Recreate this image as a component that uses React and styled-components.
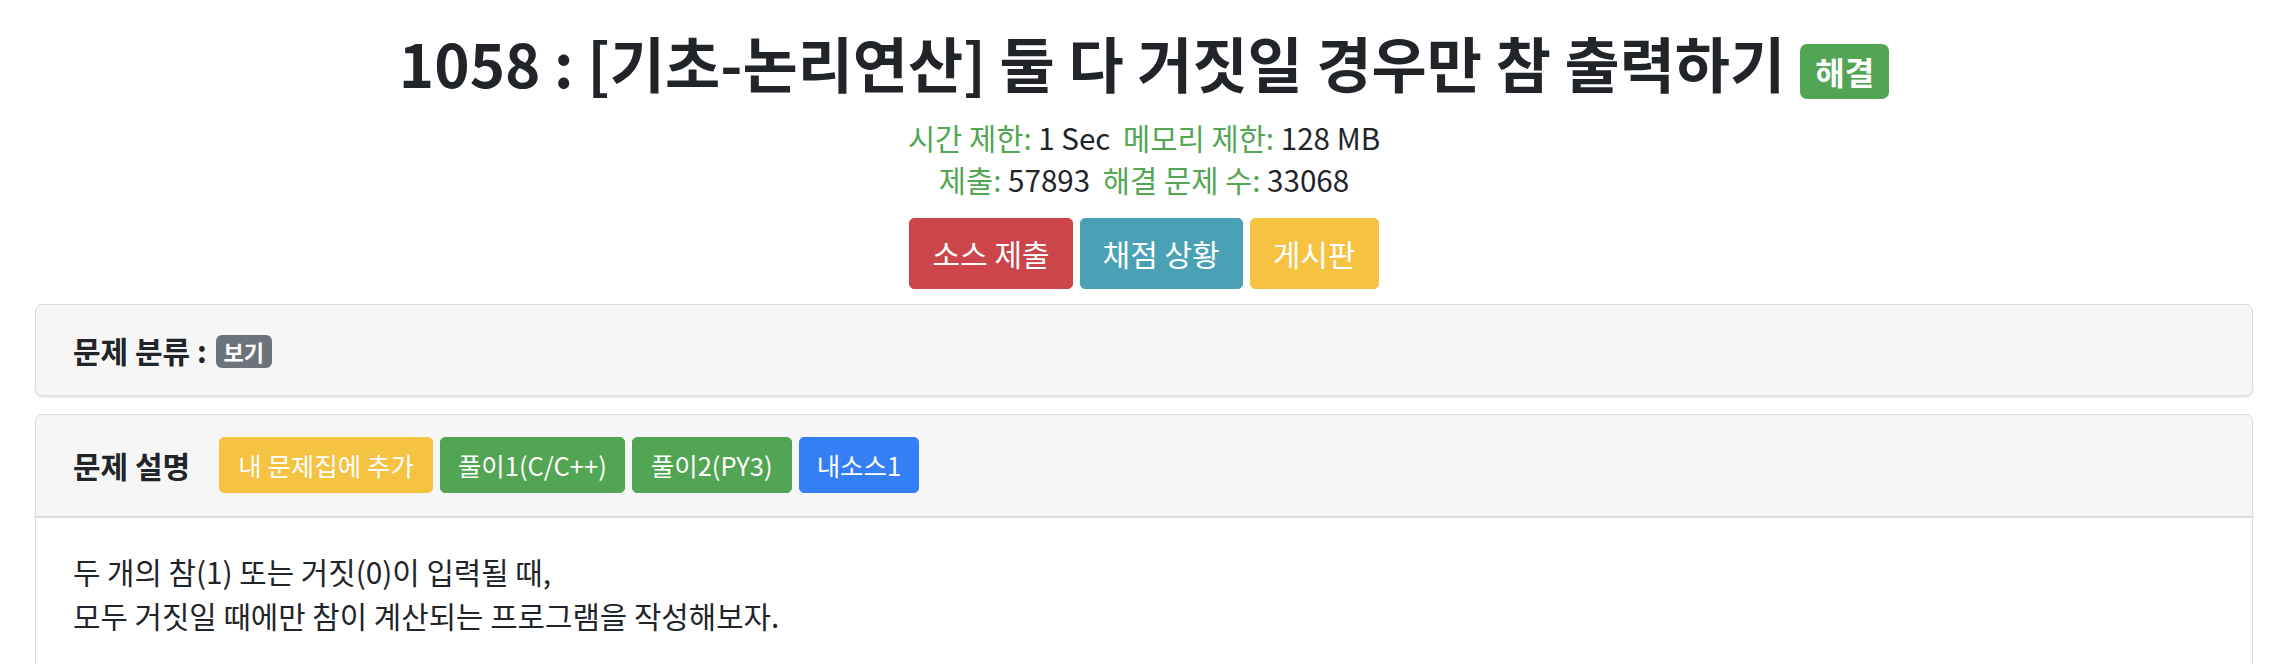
import styled, { createGlobalStyle } from "styled-components";

const GlobalStyle = createGlobalStyle`
    body {
        margin: 0;
        background: #ffffff;
        font-family: "Noto Sans CJK KR", "Noto Sans", sans-serif;
        color: #212529;
    }
`;

const Page = styled.div`
    padding: 26px 29px 0 35px;
    display: flex;
    flex-direction: column;
`;

const Title = styled.h1`
    margin: 0 0 18px;
    text-align: center;
    font-size: 60px;
    font-weight: 700;
    line-height: 1.2;
    color: #212529;
`;

const SolvedBadge = styled.span`
    display: inline-block;
    margin-left: 15px;
    padding: 11px 15px 12px;
    border-radius: 7px;
    background: #52a552;
    color: #ffffff;
    font-size: 32px;
    font-weight: 700;
    line-height: 1;
    vertical-align: 3px;
`;

const Meta = styled.div`
    text-align: center;
    font-size: 29.6px;
    line-height: 42px;
`;

const Label = styled.span`
    color: #53a653;
    margin-left: ${(p) => (p.$gap ? "6px" : "0")};
`;

const ButtonRow = styled.div`
    display: flex;
    justify-content: center;
    gap: 7px;
    margin: 17px 0 15px;
`;

const BigButton = styled.button`
    font-family: inherit;
    font-size: 30px;
    line-height: 43px;
    padding: 13px 22px;
    border: 1px solid ${(p) => p.$color};
    border-radius: 5px;
    background: ${(p) => p.$color};
    color: #ffffff;
    cursor: pointer;
`;

const Card = styled.section`
    border: 1px solid #dddddd;
    border-radius: 7px;
    background: #f6f6f6;
    box-shadow: 0 2px 1px rgba(0, 0, 0, 0.08);
    margin-bottom: 18px;
    overflow: hidden;
`;

const CardHeader = styled.div`
    display: flex;
    align-items: center;
    padding: ${(p) => p.$pad};
    border-bottom: ${(p) => (p.$line ? "2px solid #dcdcdc" : "none")};
`;

const HeaderTitle = styled.h5`
    margin: 0 ${(p) => p.$space} 0 0;
    font-size: 30px;
    font-weight: 700;
    line-height: 36px;
    color: #212529;
`;

const TagBadge = styled.span`
    display: inline-block;
    padding: 5px 8px 6px;
    border-radius: 6px;
    background: #6c737a;
    color: #ffffff;
    font-size: 22px;
    font-weight: 700;
    line-height: 1;
    margin-left: 2px;
    vertical-align: 2px;
`;

const Tools = styled.div`
    display: flex;
    gap: 7px;
    align-items: center;
`;

const SmallButton = styled.button`
    font-family: inherit;
    font-size: 25.5px;
    line-height: 36px;
    padding: 9px ${(p) => p.$px || "17px"};
    border: 1px solid ${(p) => p.$color};
    border-radius: 5px;
    background: ${(p) => p.$color};
    color: #ffffff;
    cursor: pointer;
`;

const CardBody = styled.div`
    background: #ffffff;
    padding: 31px 37px;
    min-height: 300px;
    font-size: 29.8px;
    line-height: 44px;
    color: #212529;

    p {
        margin: 0;
    }
`;

const App = () => {
    return (
        <>
            <GlobalStyle />
            <Page>
                <Title>
                    1058 : [기초-논리연산] 둘 다 거짓일 경우만 참 출력하기
                    <SolvedBadge>해결</SolvedBadge>
                </Title>
                <Meta>
                    <Label>시간 제한:</Label> 1 Sec <Label $gap>메모리 제한:</Label> 128 MB
                </Meta>
                <Meta>
                    <Label>제출:</Label> 57893 <Label $gap>해결 문제 수:</Label> 33068
                </Meta>
                <ButtonRow>
                    <BigButton $color="#cb454b">소스 제출</BigButton>
                    <BigButton $color="#4aa1b6">채점 상황</BigButton>
                    <BigButton $color="#f5c242">게시판</BigButton>
                </ButtonRow>
                <Card>
                    <CardHeader $pad="27px 37px">
                        <HeaderTitle $space="0">
                            문제 분류 : <TagBadge>보기</TagBadge>
                        </HeaderTitle>
                    </CardHeader>
                </Card>
                <Card>
                    <CardHeader $pad="22px 37px 23px" $line>
                        <HeaderTitle $space="29px">문제 설명</HeaderTitle>
                        <Tools>
                            <SmallButton $color="#f5c242" $px="18px">
                                내 문제집에 추가
                            </SmallButton>
                            <SmallButton $color="#52a552">풀이1(C/C++)</SmallButton>
                            <SmallButton $color="#52a552" $px="18px">
                                풀이2(PY3)
                            </SmallButton>
                            <SmallButton $color="#347ff6">내소스1</SmallButton>
                        </Tools>
                    </CardHeader>
                    <CardBody>
                        <p>두 개의 참(1) 또는 거짓(0)이 입력될 때,</p>
                        <p>모두 거짓일 때에만 참이 계산되는 프로그램을 작성해보자.</p>
                    </CardBody>
                </Card>
            </Page>
        </>
    );
};

export default App;
